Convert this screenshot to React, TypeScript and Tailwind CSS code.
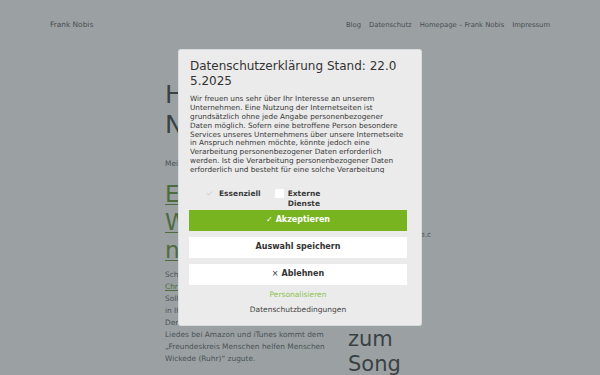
import { Check } from 'lucide-react';

const FONT = "font-['DejaVu_Sans',_'Noto_Sans',_sans-serif]";

const NAV = ['Blog', 'Datenschutz', 'Homepage – Frank Nobis', 'Impressum'];

const POLICY = [
  'Wir freuen uns sehr über Ihr Interesse an unserem',
  'Unternehmen. Eine Nutzung der Internetseiten ist',
  'grundsätzlich ohne jede Angabe personenbezogener',
  'Daten möglich. Sofern eine betroffene Person besondere',
  'Services unseres Unternehmens über unsere Internetseite',
  'in Anspruch nehmen möchte, könnte jedoch eine',
  'Verarbeitung personenbezogener Daten erforderlich',
  'werden. Ist die Verarbeitung personenbezogener Daten',
  'erforderlich und besteht für eine solche Verarbeitung',
  'keine gesetzliche Grundlage, holen wir generell eine',
  'Einwilligung der betroffenen Person ein.',
];

function ConsentModal() {
  return (
    <div className="absolute left-[179px] top-[50px] w-[242px] bg-[#ebebeb] rounded-[2px] shadow-[0_0_0_1px_#d9dcdd] px-[10px] pt-[9.4px] pb-[10px] text-[#333]">
      <h2 className="pl-[1px] text-[12px] leading-[15px] text-[#333]">
        <span className="block whitespace-nowrap">Datenschutzerklärung Stand: 22.0</span>
        <span className="block whitespace-nowrap">5.2025</span>
      </h2>
      <div className="mt-[6px] pl-[1px] w-[222px] h-[78px] overflow-hidden text-[7.3px] leading-[8.8px] text-[#3a3a3a]">
        {POLICY.map(l => (
          <span key={l} className="block whitespace-nowrap">{l}</span>
        ))}
      </div>

      <div className="mt-[15.6px] ml-[16px] flex items-start h-[21px]">
        <div className="flex items-start">
          <div className="w-[9px] h-[9px] flex items-center justify-center text-[#b4b4b4]">
            <Check size={7} strokeWidth={2} />
          </div>
          <span className="ml-[5px] text-[7.5px] leading-[10.5px] font-bold text-[#3a3a3a]">Essenziell</span>
        </div>
        <div className="ml-[14px] flex items-start">
          <div className="w-[9px] h-[9px] bg-white" />
          <span className="ml-[4px] w-[40px] text-[7.5px] leading-[10.5px] font-bold text-[#3a3a3a]">
            Externe Dienste
          </span>
        </div>
      </div>

      <button className="w-[218px] h-[21px] flex items-center justify-center gap-[3px] bg-[#78b41f] text-white text-[8px] font-bold">
        <span className="font-normal">✓</span>
        <span>Akzeptieren</span>
      </button>
      <button className="mt-[6px] w-[218px] h-[21px] flex items-center justify-center bg-white text-[#333] text-[8px] font-bold">
        Auswahl speichern
      </button>
      <button className="mt-[6px] w-[218px] h-[21px] flex items-center justify-center gap-[3px] bg-white text-[#333] text-[8px] font-bold">
        <span className="font-normal">×</span>
        <span>Ablehnen</span>
      </button>

      <div className="w-[218px] mt-[5px] text-center text-[7.5px] leading-[10px] text-[#8dc24f]">Personalisieren</div>
      <div className="w-[218px] mt-[5px] text-center text-[7.5px] leading-[10px] text-[#444]">Datenschutzbedingungen</div>
    </div>
  );
}

export default function App() {
  return (
    <div className={`relative w-[600px] h-[375px] overflow-hidden bg-[#9ba1a3] ${FONT}`}>
      <header className="h-[50px] px-[50px] flex items-center justify-between text-[#464d50]">
        <span className="text-[7.4px]">Frank Nobis</span>
        <nav className="flex items-center gap-[8px] text-[6.8px]">
          {NAV.map(n => (
            <span key={n}>{n}</span>
          ))}
        </nav>
      </header>

      <main className="flex pl-[165px]">
        <div className="w-[170px] shrink-0">
          <h1 className="mt-[30px] text-[25px] leading-[30px] text-[#3a4143]">Hallo Nachbarn</h1>
          <p className="mt-[18px] text-[7.4px] leading-[12px] text-[#4a5154]">Meine Musik für einen guten Zweck</p>
          <h2 className="mt-[10px] text-[23px] leading-[28px] text-[#4e6b3f] underline decoration-1 underline-offset-2">
            Ein Weihnachtslied neu aufgelegt
          </h2>
          <p className="mt-[5px] text-[7.4px] leading-[12px] text-[#4a5154] whitespace-nowrap">
            Schaut euch das neue Video von
            <br />
            <span className="text-[#4e6b3f] underline">Christian an</span>
            <br />
            Sollte euch das Lied gefallen, dann
            <br />
            in Ihr unterstützen Sie alle
            <br />
            Den Erlös aus dem Verkauf des
            <br />
            Liedes bei Amazon und iTunes kommt dem
            <br />
            „Freundeskreis Menschen helfen Menschen
            <br />
            Wickede (Ruhr)“ zugute.
          </p>
        </div>

        <div className="ml-[13px] w-[86px] shrink-0">
          <p className="mt-[179px] text-[7.4px] leading-[12px] text-[#4a5154] break-all">
            https://www.youtube.com/watch
          </p>
          <h2 className="mt-[49px] text-[21px] leading-[25px] text-[#3a4143]">Text zum Song</h2>
        </div>
      </main>

      <ConsentModal />
    </div>
  );
}
